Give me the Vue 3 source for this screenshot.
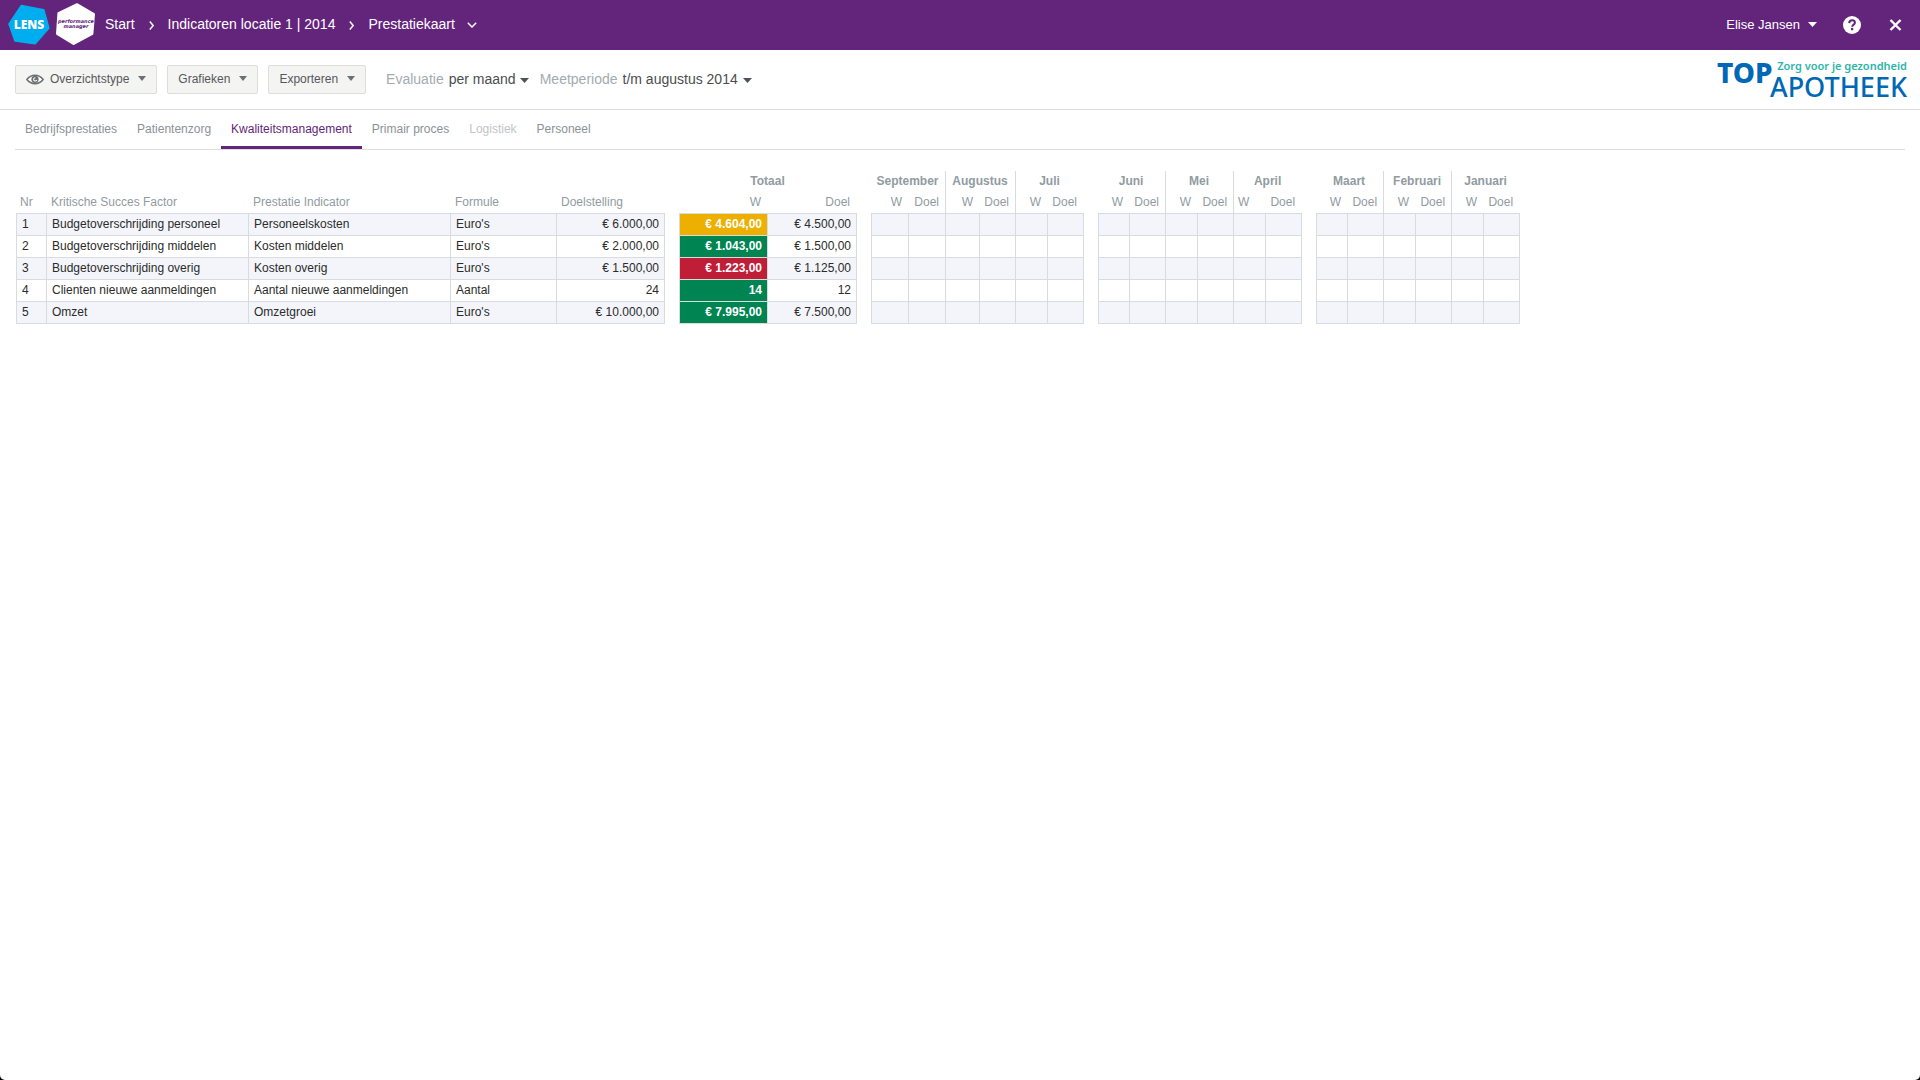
<script setup>
import { ref } from 'vue'

const evaluation = ref('per maand')
const period = ref('t/m augustus 2014')

const tabs = [
  { label: 'Bedrijfsprestaties' },
  { label: 'Patientenzorg' },
  { label: 'Kwaliteitsmanagement', active: true },
  { label: 'Primair proces' },
  { label: 'Logistiek', disabled: true },
  { label: 'Personeel' },
]

const quarters = [
  ['September', 'Augustus', 'Juli'],
  ['Juni', 'Mei', 'April'],
  ['Maart', 'Februari', 'Januari'],
]

const columnWidths = [
  31, 202, 202, 106, 108,
  14, 89, 89,
  14, 38, 37, 34, 36, 32, 36,
  14, 32, 36, 32, 36, 32, 36,
  14, 32, 36, 32, 36, 32, 36,
]

const rows = [
  { factor: 'Budgetoverschrijding personeel', indicator: 'Personeelskosten', formula: "Euro's", target: '€ 6.000,00', value: '€ 4.604,00', goal: '€ 4.500,00', status: 'warn' },
  { factor: 'Budgetoverschrijding middelen', indicator: 'Kosten middelen', formula: "Euro's", target: '€ 2.000,00', value: '€ 1.043,00', goal: '€ 1.500,00', status: 'good' },
  { factor: 'Budgetoverschrijding overig', indicator: 'Kosten overig', formula: "Euro's", target: '€ 1.500,00', value: '€ 1.223,00', goal: '€ 1.125,00', status: 'bad' },
  { factor: 'Clienten nieuwe aanmeldingen', indicator: 'Aantal nieuwe aanmeldingen', formula: 'Aantal', target: '24', value: '14', goal: '12', status: 'good' },
  { factor: 'Omzet', indicator: 'Omzetgroei', formula: "Euro's", target: '€ 10.000,00', value: '€ 7.995,00', goal: '€ 7.500,00', status: 'good' },
]
</script>

<template>
  <div class="page">
    <header class="topbar">
      <a href="#" class="brand" aria-label="LENS performance manager">
        <svg width="96" height="50" viewBox="0 0 96 50">
          <polygon points="21.4,5.8 43.6,10 48.6,28 35,43.6 15.2,40.8 9.2,24" fill="#00aeef" stroke="#00aeef" stroke-width="2" stroke-linejoin="round" />
          <text x="29" y="29" text-anchor="middle" class="lens">LENS</text>
          <polygon points="77,4.2 94,14 92.4,33.8 73.4,44 57,33.8 58.4,13.2" fill="#fff" stroke="#fff" stroke-width="2" stroke-linejoin="round" />
          <text x="76" y="23" text-anchor="middle" class="pm">performance</text>
          <text x="76" y="28" text-anchor="middle" class="pm">manager</text>
        </svg>
      </a>
      <nav class="crumbs" aria-label="Kruimelpad">
        <a href="#">Start</a>
        <svg width="5" height="9" viewBox="0 0 5 9"><path d="M.8.6 4.2 4.5.8 8.4" class="chev" /></svg>
        <a href="#">Indicatoren locatie 1 | 2014</a>
        <svg width="5" height="9" viewBox="0 0 5 9"><path d="M.8.6 4.2 4.5.8 8.4" class="chev" /></svg>
        <button type="button" class="crumb-menu">
          <span>Prestatiekaart</span>
          <svg width="10" height="6" viewBox="0 0 10 6"><path d="M.8.8 5 5 9.2.8" class="chev" /></svg>
        </button>
      </nav>
      <div class="account">
        <button type="button" class="user">
          Elise Jansen
          <svg width="9" height="5" viewBox="0 0 9 5"><path d="M0 0h9L4.500 5z" fill="currentColor" /></svg>
        </button>
        <div class="tools">
          <button type="button" aria-label="Help">
            <svg width="18" height="18" viewBox="0 0 18 18">
              <circle cx="9" cy="9" r="9" fill="#fff" />
              <path d="M6.200 7.100C6.300 5.300 7.500 4.300 9.100 4.300c1.700 0 2.800 1 2.800 2.400 0 1.900-2.700 1.900-2.700 4" fill="none" stroke="#63257b" stroke-width="2" />
              <circle cx="9.100" cy="13.100" r="1.300" fill="#63257b" />
            </svg>
          </button>
          <button type="button" aria-label="Sluiten">
            <svg width="13" height="13" viewBox="0 0 13 13"><path d="M1.500 1l10 10M11.500 1l-10 10" fill="none" stroke="#fff" stroke-width="2.400" /></svg>
          </button>
        </div>
      </div>
    </header>

    <div class="toolbar">
      <div class="buttons">
        <button type="button" class="btn">
          <svg class="eye" width="18" height="12" viewBox="0 0 18 12">
            <path d="M.9 6.500C3 3.600 5.800 2.200 9 2.200s6 1.400 8.100 4.300C15 9.200 12.200 10.600 9 10.600S3 9.200.9 6.500z" fill="#fff" stroke="#6d7073" stroke-width="1.600" />
            <circle cx="9" cy="6.300" r="3.600" fill="#6d7073" />
            <path d="M9.400 4.800A1.600 1.600 0 1 0 10.700 7" fill="none" stroke="#fff" stroke-width="1.100" />
          </svg>
          Overzichtstype
          <svg class="caret" width="8" height="5" viewBox="0 0 8 5"><path d="M0 0h8L4 5z" /></svg>
        </button>
        <button type="button" class="btn">
          Grafieken
          <svg class="caret" width="8" height="5" viewBox="0 0 8 5"><path d="M0 0h8L4 5z" /></svg>
        </button>
        <button type="button" class="btn">
          Exporteren
          <svg class="caret" width="8" height="5" viewBox="0 0 8 5"><path d="M0 0h8L4 5z" /></svg>
        </button>
      </div>
      <div class="filters">
        <div class="filter">
          <label for="evaluation">Evaluatie</label>
          <select id="evaluation" v-model="evaluation"><option>per maand</option></select>
        </div>
        <div class="filter">
          <label for="period">Meetperiode</label>
          <select id="period" v-model="period"><option>t/m augustus 2014</option></select>
        </div>
      </div>
      <svg class="client" width="192" height="59" viewBox="0 0 192 59" role="img" aria-label="Top Apotheek">
        <text x="1" y="33" class="client-top">TOP</text>
        <text x="191" y="20" text-anchor="end" class="client-tag">Zorg voor je gezondheid</text>
        <text x="191" y="47" text-anchor="end" class="client-name">APOTHEEK</text>
      </svg>
    </div>

    <nav class="tabs" aria-label="Categorie">
      <a v-for="tab in tabs" :key="tab.label" href="#" class="tab" :class="{ active: tab.active, disabled: tab.disabled }">{{ tab.label }}</a>
    </nav>

    <main class="content">
      <table class="scores">
        <colgroup>
          <col v-for="(w, i) in columnWidths" :key="i" :style="{ width: w + 'px' }">
        </colgroup>
        <thead>
          <tr class="months">
            <td colspan="5"></td>
            <td></td>
            <th colspan="2" scope="colgroup">Totaal</th>
            <template v-for="(quarter, q) in quarters" :key="q">
              <td></td>
              <th v-for="(month, m) in quarter" :key="month" colspan="2" scope="colgroup" :class="{ divided: m < 2 }">{{ month }}</th>
            </template>
          </tr>
          <tr class="labels">
            <th scope="col">Nr</th>
            <th scope="col">Kritische Succes Factor</th>
            <th scope="col">Prestatie Indicator</th>
            <th scope="col">Formule</th>
            <th scope="col">Doelstelling</th>
            <td class="gap"></td>
            <th scope="col" class="num">W</th>
            <th scope="col" class="num">Doel</th>
            <template v-for="(quarter, q) in quarters" :key="q">
              <td class="gap"></td>
              <template v-for="(month, m) in quarter" :key="month">
                <th scope="col" :class="{ num: month !== 'April' }">W</th>
                <th scope="col" class="num" :class="{ divided: m < 2 }">Doel</th>
              </template>
            </template>
          </tr>
        </thead>
        <tbody>
          <tr v-for="(row, i) in rows" :key="i">
            <td class="first">{{ i + 1 }}</td>
            <td>{{ row.factor }}</td>
            <td>{{ row.indicator }}</td>
            <td>{{ row.formula }}</td>
            <td class="num">{{ row.target }}</td>
            <td class="gap"></td>
            <td class="first num value" :class="row.status">{{ row.value }}</td>
            <td class="num">{{ row.goal }}</td>
            <template v-for="q in 3" :key="q">
              <td class="gap"></td>
              <td v-for="c in 6" :key="c" :class="{ first: c === 1 }"></td>
            </template>
          </tr>
        </tbody>
      </table>
    </main>
  </div>
</template>

<style>
html {
  background: #000;
}
body {
  margin: 0;
}
</style>

<style scoped>
.page {
  min-height: 100vh;
  box-sizing: border-box;
  background: #fff;
  border-radius: 0 0 5px 5px;
  font-family: "Liberation Sans", Arial, sans-serif;
  font-size: 12px;
  color: #2b2b2b;
}
button {
  font: inherit;
  color: inherit;
  background: none;
  border: 0;
  padding: 0;
  display: flex;
  align-items: center;
  white-space: nowrap;
}
a {
  color: inherit;
  text-decoration: none;
}
svg {
  display: block;
  flex: none;
}

.topbar {
  display: flex;
  align-items: center;
  height: 50px;
  background: #63257b;
  color: #fff;
}
.lens {
  font: 800 12px "Open Sans", sans-serif;
  fill: #fff;
}
.pm {
  font: italic 700 5px "DejaVu Sans", sans-serif;
  fill: #63257b;
}
.crumbs {
  display: flex;
  align-items: center;
  gap: 14px;
  margin-left: 9px;
  font-size: 14px;
  line-height: 16px;
}
.crumbs a,
.crumbs span {
  padding-bottom: 2px;
}
.crumb-menu {
  gap: 12px;
}
.chev {
  fill: none;
  stroke: #fff;
  stroke-width: 1.5;
}
.account,
.tools {
  display: flex;
  align-items: center;
  gap: 26px;
}
.account {
  margin-left: auto;
  padding-right: 18px;
  font-size: 13px;
}
.tools {
  gap: 28px;
}
.user {
  gap: 8px;
  padding-bottom: 2px;
}

.toolbar {
  display: flex;
  align-items: center;
  height: 59px;
  padding: 0 12px 0 15px;
  border-bottom: 1px solid #dcdee0;
}
.buttons {
  display: flex;
  gap: 10px;
}
.btn {
  height: 29px;
  padding: 0 10px 2px;
  gap: 9px;
  border: 1px solid #dcdddd;
  border-radius: 2px;
  background: #f4f4f2;
  color: #55585b;
}
.eye {
  margin-right: -3px;
}
.caret {
  fill: #6d7073;
}
.filters {
  display: flex;
  gap: 11px;
  margin-left: 20px;
  padding-bottom: 2px;
  font-size: 14px;
}
.filter {
  display: flex;
  align-items: center;
  gap: 5px;
}
.filter label {
  color: #a3abb1;
}
.filter select {
  appearance: none;
  font: inherit;
  color: #4a4d50;
  border: 0;
  padding: 0 13px 0 0;
  background: url("data:image/svg+xml,%3Csvg xmlns='http://www.w3.org/2000/svg' width='9' height='5'%3E%3Cpath d='M0 0h9L4.500 5z' fill='%23505356'/%3E%3C/svg%3E") no-repeat right 7px;
}
.client {
  margin-left: auto;
}
.client-top {
  font: 800 28px "Noto Sans", sans-serif;
  fill: #0068b4;
}
.client-name {
  font: 500 27px "Noto Sans", sans-serif;
  fill: #0068b4;
}
.client-tag {
  font: 600 11px "Noto Sans", sans-serif;
  fill: #2cb5a9;
}

.tabs {
  display: flex;
  height: 39px;
  margin: 0 15px;
  border-bottom: 1px solid #dcdee0;
  color: #8b9297;
}
.tab {
  padding: 0 10px;
  line-height: 38px;
}
.tab.active {
  color: #63257b;
  border-bottom: 3px solid #63257b;
  height: 36px;
}
.tab.disabled {
  color: #bfc5c9;
}

.content {
  padding: 21px 16px;
  overflow-x: auto;
}
.scores {
  table-layout: fixed;
  width: 0;
  border-spacing: 0;
}
.scores td,
.scores th {
  box-sizing: border-box;
  padding: 0 5px;
  text-align: left;
  white-space: nowrap;
  line-height: 14px;
}
.scores .months th {
  height: 20px;
  padding: 0 1px 0 0;
  text-align: center;
  color: #919ba1;
}
.scores .labels th {
  height: 23px;
  padding: 0 4px;
  font-weight: 400;
  color: #919ba1;
  border-bottom: 1px solid #d9dcdf;
}
.scores .labels .num {
  padding-right: 7px;
}
.scores .labels .num.divided {
  padding-right: 6px;
}
.scores .divided {
  border-right: 1px solid #d9dcdf;
}
.scores tbody td {
  height: 22px;
  padding-bottom: 2px;
  border: solid #d9dcdf;
  border-width: 0 1px 1px 0;
}
.scores tbody tr:nth-child(odd) td {
  background: #f3f5fa;
}
.scores tbody td.first {
  border-left-width: 1px;
}
.scores tbody tr td.gap {
  border: 0;
  background: none;
}
.scores .num {
  text-align: right;
}
.scores tbody .value {
  font-weight: 700;
  color: #fff;
}
.scores tbody tr td.warn {
  background: #edb000;
}
.scores tbody tr td.good {
  background: #008552;
}
.scores tbody tr td.bad {
  background: #c01e37;
}
</style>
